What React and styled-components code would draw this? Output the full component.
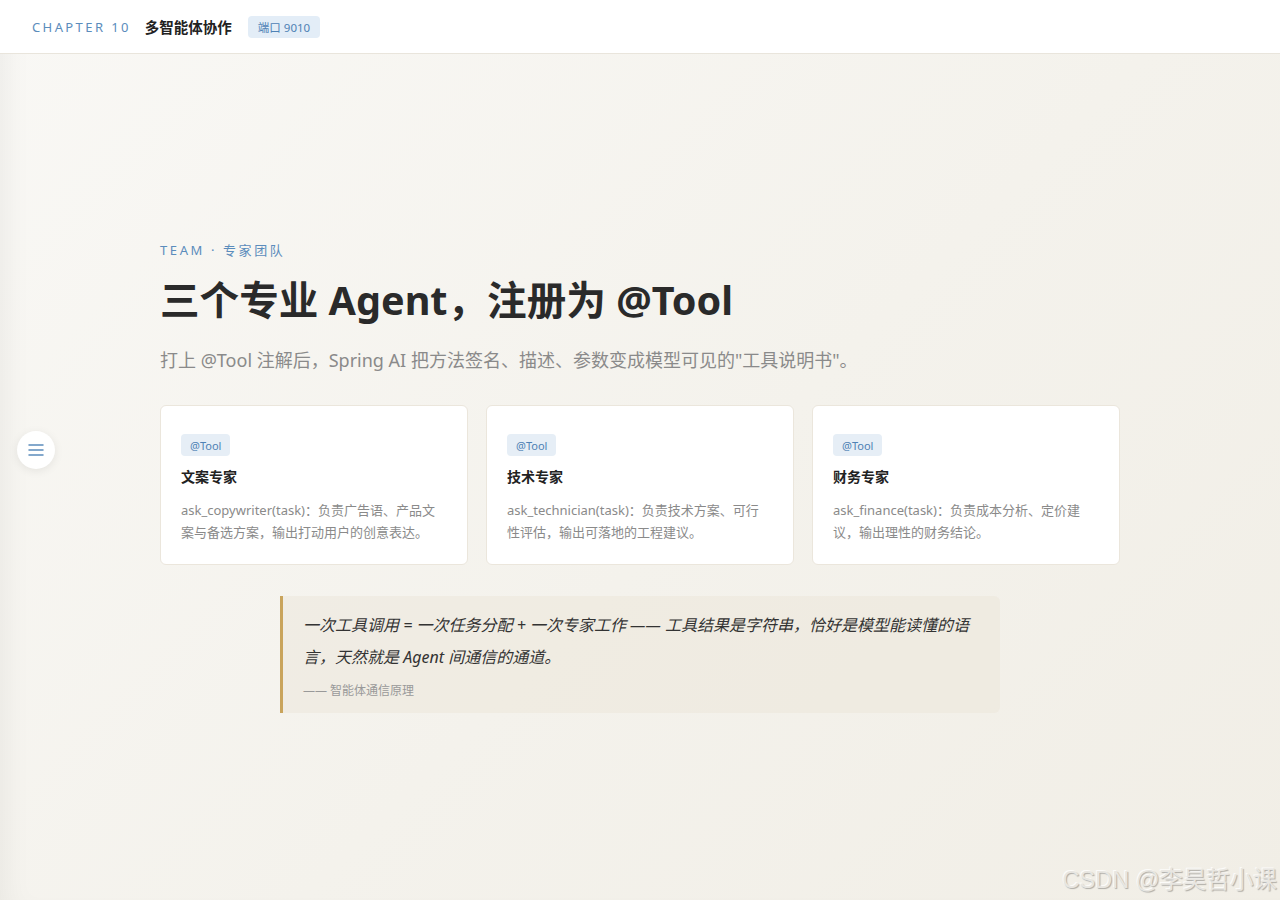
import React from 'react'
import styled, { createGlobalStyle } from 'styled-components'

const GlobalStyle = createGlobalStyle`
  html, body {
    margin: 0;
    padding: 0;
  }
  body {
    font-family: "Noto Sans", "Noto Sans CJK SC", sans-serif;
    background: #f5f3ee;
    color: #2a2a2a;
  }
  * {
    box-sizing: border-box;
  }
`

const Page = styled.div`
  position: relative;
  min-height: 900px;
  display: flex;
  flex-direction: column;
  background: linear-gradient(135deg, #f9f8f5 0%, #f4f2ec 55%, #f1eee6 100%);
  box-shadow: inset 24px 0 30px -20px rgba(0, 0, 0, 0.06);
`

const TopBar = styled.header`
  height: 54px;
  display: flex;
  align-items: center;
  gap: 14px;
  padding: 0 32px;
  background: #fff;
  border-bottom: 1px solid #e9e5dc;

  .chapter {
    font-size: 13px;
    letter-spacing: 2.4px;
    color: #5b8cbc;
  }

  .name {
    font-size: 14.5px;
    font-weight: 700;
    color: #222;
    margin-right: 2px;
  }
`

const Badge = styled.span`
  display: inline-flex;
  align-items: center;
  height: 22px;
  padding: 0 ${p => p.$pad || '10px'};
  border-radius: 4px;
  background: ${p => p.$bg || '#e3edf7'};
  color: #4f82b5;
  font-size: ${p => p.$size || '11px'};
`

const Main = styled.main`
  flex: 1;
  display: flex;
  align-items: center;
  justify-content: center;
  padding-bottom: 2px;
`

const Content = styled.section`
  width: 960px;
  display: flex;
  flex-direction: column;

  .eyebrow {
    font-size: 13px;
    letter-spacing: 2.6px;
    color: #5b8cbc;
    margin: 0 0 13px;
  }

  h1 {
    margin: 0;
    font-size: 39.6px;
    line-height: 56px;
    font-weight: 700;
    color: #2a2a2a;
  }

  .lead {
    margin: 19px 0 32px;
    font-size: 18px;
    line-height: 26px;
    color: #8a8a8a;
  }
`

const Cards = styled.div`
  display: grid;
  grid-template-columns: repeat(3, 1fr);
  gap: 18px;
`

const Card = styled.div`
  height: 160px;
  background: #fff;
  border: 1px solid #ebe6dc;
  border-radius: 6px;
  padding: 27px 28px 20px 20px;

  h3 {
    margin: 10px 0 0;
    font-size: 14px;
    line-height: 22px;
    font-weight: 700;
    color: #222;
  }

  p {
    margin: 11px 0 0;
    font-size: 13px;
    line-height: 22px;
    color: #8a8a8a;
  }
`

const Quote = styled.blockquote`
  width: 720px;
  align-self: center;
  margin: 31px 0 0;
  padding: 13px 20px 13px 20px;
  border-left: 3px solid #c9a45c;
  border-radius: 0 6px 6px 0;
  background: rgba(234, 229, 214, 0.45);

  .text {
    margin: 0;
    font-size: 16px;
    line-height: 32px;
    font-style: italic;
    color: #333;
  }

  .cite {
    margin-top: 9px;
    font-size: 12px;
    line-height: 18px;
    color: #999;
  }
`

const MenuButton = styled.button`
  position: absolute;
  left: 17px;
  top: 431px;
  width: 38px;
  height: 38px;
  border-radius: 50%;
  border: none;
  background: #fff;
  box-shadow: 0 2px 10px rgba(0, 0, 0, 0.08);
  display: flex;
  align-items: center;
  justify-content: center;
  padding: 0;
`

const Watermark = styled.div`
  position: absolute;
  right: 3px;
  bottom: 5px;
  font-family: "Liberation Sans", "Noto Sans CJK SC", sans-serif;
  font-size: 23.5px;
  color: #e8e6e1;
  text-shadow: 1px 1px 1px rgba(0, 0, 0, 0.28), -1px -1px 0 rgba(255, 255, 255, 0.8);
  pointer-events: none;
`

const cards = [
  {
    title: '文案专家',
    desc: 'ask_copywriter(task)：负责广告语、产品文案与备选方案，输出打动用户的创意表达。',
  },
  {
    title: '技术专家',
    desc: 'ask_technician(task)：负责技术方案、可行性评估，输出可落地的工程建议。',
  },
  {
    title: '财务专家',
    desc: 'ask_finance(task)：负责成本分析、定价建议，输出理性的财务结论。',
  },
]

export default function App() {
  return (
    <Page>
      <GlobalStyle />
      <TopBar>
        <span className="chapter">CHAPTER 10</span>
        <span className="name">多智能体协作</span>
        <Badge $size="11.5px">端口 9010</Badge>
      </TopBar>
      <Main>
        <Content>
          <div className="eyebrow">TEAM · 专家团队</div>
          <h1>三个专业 Agent，注册为 @Tool</h1>
          <p className="lead">打上 @Tool 注解后，Spring AI 把方法签名、描述、参数变成模型可见的"工具说明书"。</p>
          <Cards>
            {cards.map(c => (
              <Card key={c.title}>
                <Badge $bg="#e6eef6" $pad="9px">@Tool</Badge>
                <h3>{c.title}</h3>
                <p>{c.desc}</p>
              </Card>
            ))}
          </Cards>
          <Quote>
            <p className="text">一次工具调用 = 一次任务分配 + 一次专家工作 —— 工具结果是字符串，恰好是模型能读懂的语言，天然就是 Agent 间通信的通道。</p>
            <div className="cite">—— 智能体通信原理</div>
          </Quote>
        </Content>
      </Main>
      <MenuButton aria-label="menu">
        <svg width="16" height="14" viewBox="0 0 16 14">
          <path d="M1 2h14M1 7h14M1 12h14" stroke="#5b8cbc" strokeWidth="1.5" strokeLinecap="round" />
        </svg>
      </MenuButton>
      <Watermark>CSDN @李昊哲小课</Watermark>
    </Page>
  )
}
